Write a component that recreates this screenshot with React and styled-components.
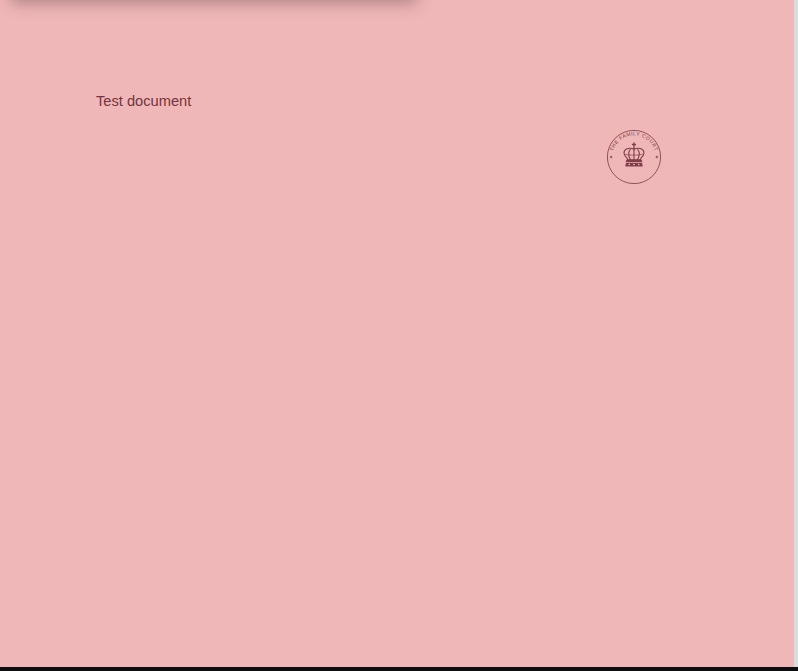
import React from "react";
import styled, { createGlobalStyle } from "styled-components";

const Global = createGlobalStyle`
  html, body { margin: 0; padding: 0; height: 100%; overflow: hidden; }
  body { font-family: "Liberation Sans", Arial, sans-serif; background: #000; }
`;
const Shell = styled.div`
  display: flex;
  flex-direction: column;
  width: 798px;
  height: 671px;
  background: #0d0d10;
`;
const Viewer = styled.div`
  display: flex;
  height: 667px;
`;
const Page = styled.main`
  position: relative;
  flex: 1;
  background: #f0b7b8;
  padding: 92px 132px 0 96px;
  display: flex;
  justify-content: space-between;
  align-items: flex-start;
  overflow: hidden;
`;
const Scrollbar = styled.div`
  width: 4px;
  background: #d9dcde;
`;
const DropShadow = styled.div`
  position: absolute;
  top: -12px;
  left: 16px;
  width: 396px;
  height: 10px;
  box-shadow: 0 0 16px 5px rgba(80, 55, 60, 0.42);
`;
const DocText = styled.p`
  margin: 0;
  font-size: 14.67px;
  line-height: 18px;
  color: #703540;
`;
const Stamp = styled.svg`
  display: block;
  width: 56px;
  height: 56px;
  margin-top: 37px;
`;
const StampLabel = styled.text`
  font-family: "Liberation Sans", Arial, sans-serif;
  font-size: 5px;
  letter-spacing: 0.5px;
  fill: #7a3c46;
`;

const Seal = () => (
  <Stamp viewBox="0 0 56 56" role="img" aria-label="The Family Court seal">
    <circle cx="28" cy="28" r="26.6" fill="none" stroke="#85464f" strokeWidth="0.9" />
    <defs>
      <path id="arc" d="M6.4 28 A21.6 21.6 0 0 1 49.6 28" />
    </defs>
    <StampLabel textAnchor="middle">
      <textPath href="#arc" startOffset="50%">THE FAMILY COURT</textPath>
    </StampLabel>
    <path d="M5.1 26.2l.5 1.3 1.3.5-1.3.5-.5 1.3-.5-1.3-1.3-.5 1.3-.5zM50.9 26.2l.5 1.3 1.3.5-1.3.5-.5 1.3-.5-1.3-1.3-.5 1.3-.5z" fill="#7a3c46" />
    <g fill="none" stroke="#7f3e48" strokeLinecap="round">
      <path d="M28 14v5.500M26.500 15.500h3" strokeWidth="1.300" />
      <path d="M28 20.500c-1.800-1.800-7-1.800-9 .6-1.800 2.300-.4 5.400 1.400 7.200.8.8 1.100 1.600 1.200 2.400h12.800c.1-.8.4-1.600 1.200-2.400 1.800-1.800 3.200-4.900 1.400-7.200-2-2.400-7.200-2.400-9-.6z" strokeWidth="1.100" />
      <path d="M28 20.500v10M24.200 20.500c-1.900 2.600-1.600 6.800.2 10M31.800 20.500c1.900 2.600 1.600 6.800-.2 10" strokeWidth="1.100" />
      <path d="M19.500 25.300c2 1.200 15 1.200 17 0" strokeWidth="0.700" />
    </g>
    <path d="M20.300 30.700h15.400l.6 2.300H19.700z" fill="#7f3e48" />
    <path d="M20 33.700h16l.8 3.700H19.200z" fill="#7f3e48" />
    <g fill="#f0b7b8">
      <circle cx="23.200" cy="35.600" r="0.800" />
      <circle cx="28" cy="35.600" r="0.800" />
      <circle cx="32.800" cy="35.600" r="0.800" />
    </g>
  </Stamp>
);

export default function App() {
  return (
    <Shell>
      <Global />
      <Viewer>
        <Page>
          <DropShadow />
          <DocText>Test document</DocText>
          <Seal />
        </Page>
        <Scrollbar />
      </Viewer>
    </Shell>
  );
}
